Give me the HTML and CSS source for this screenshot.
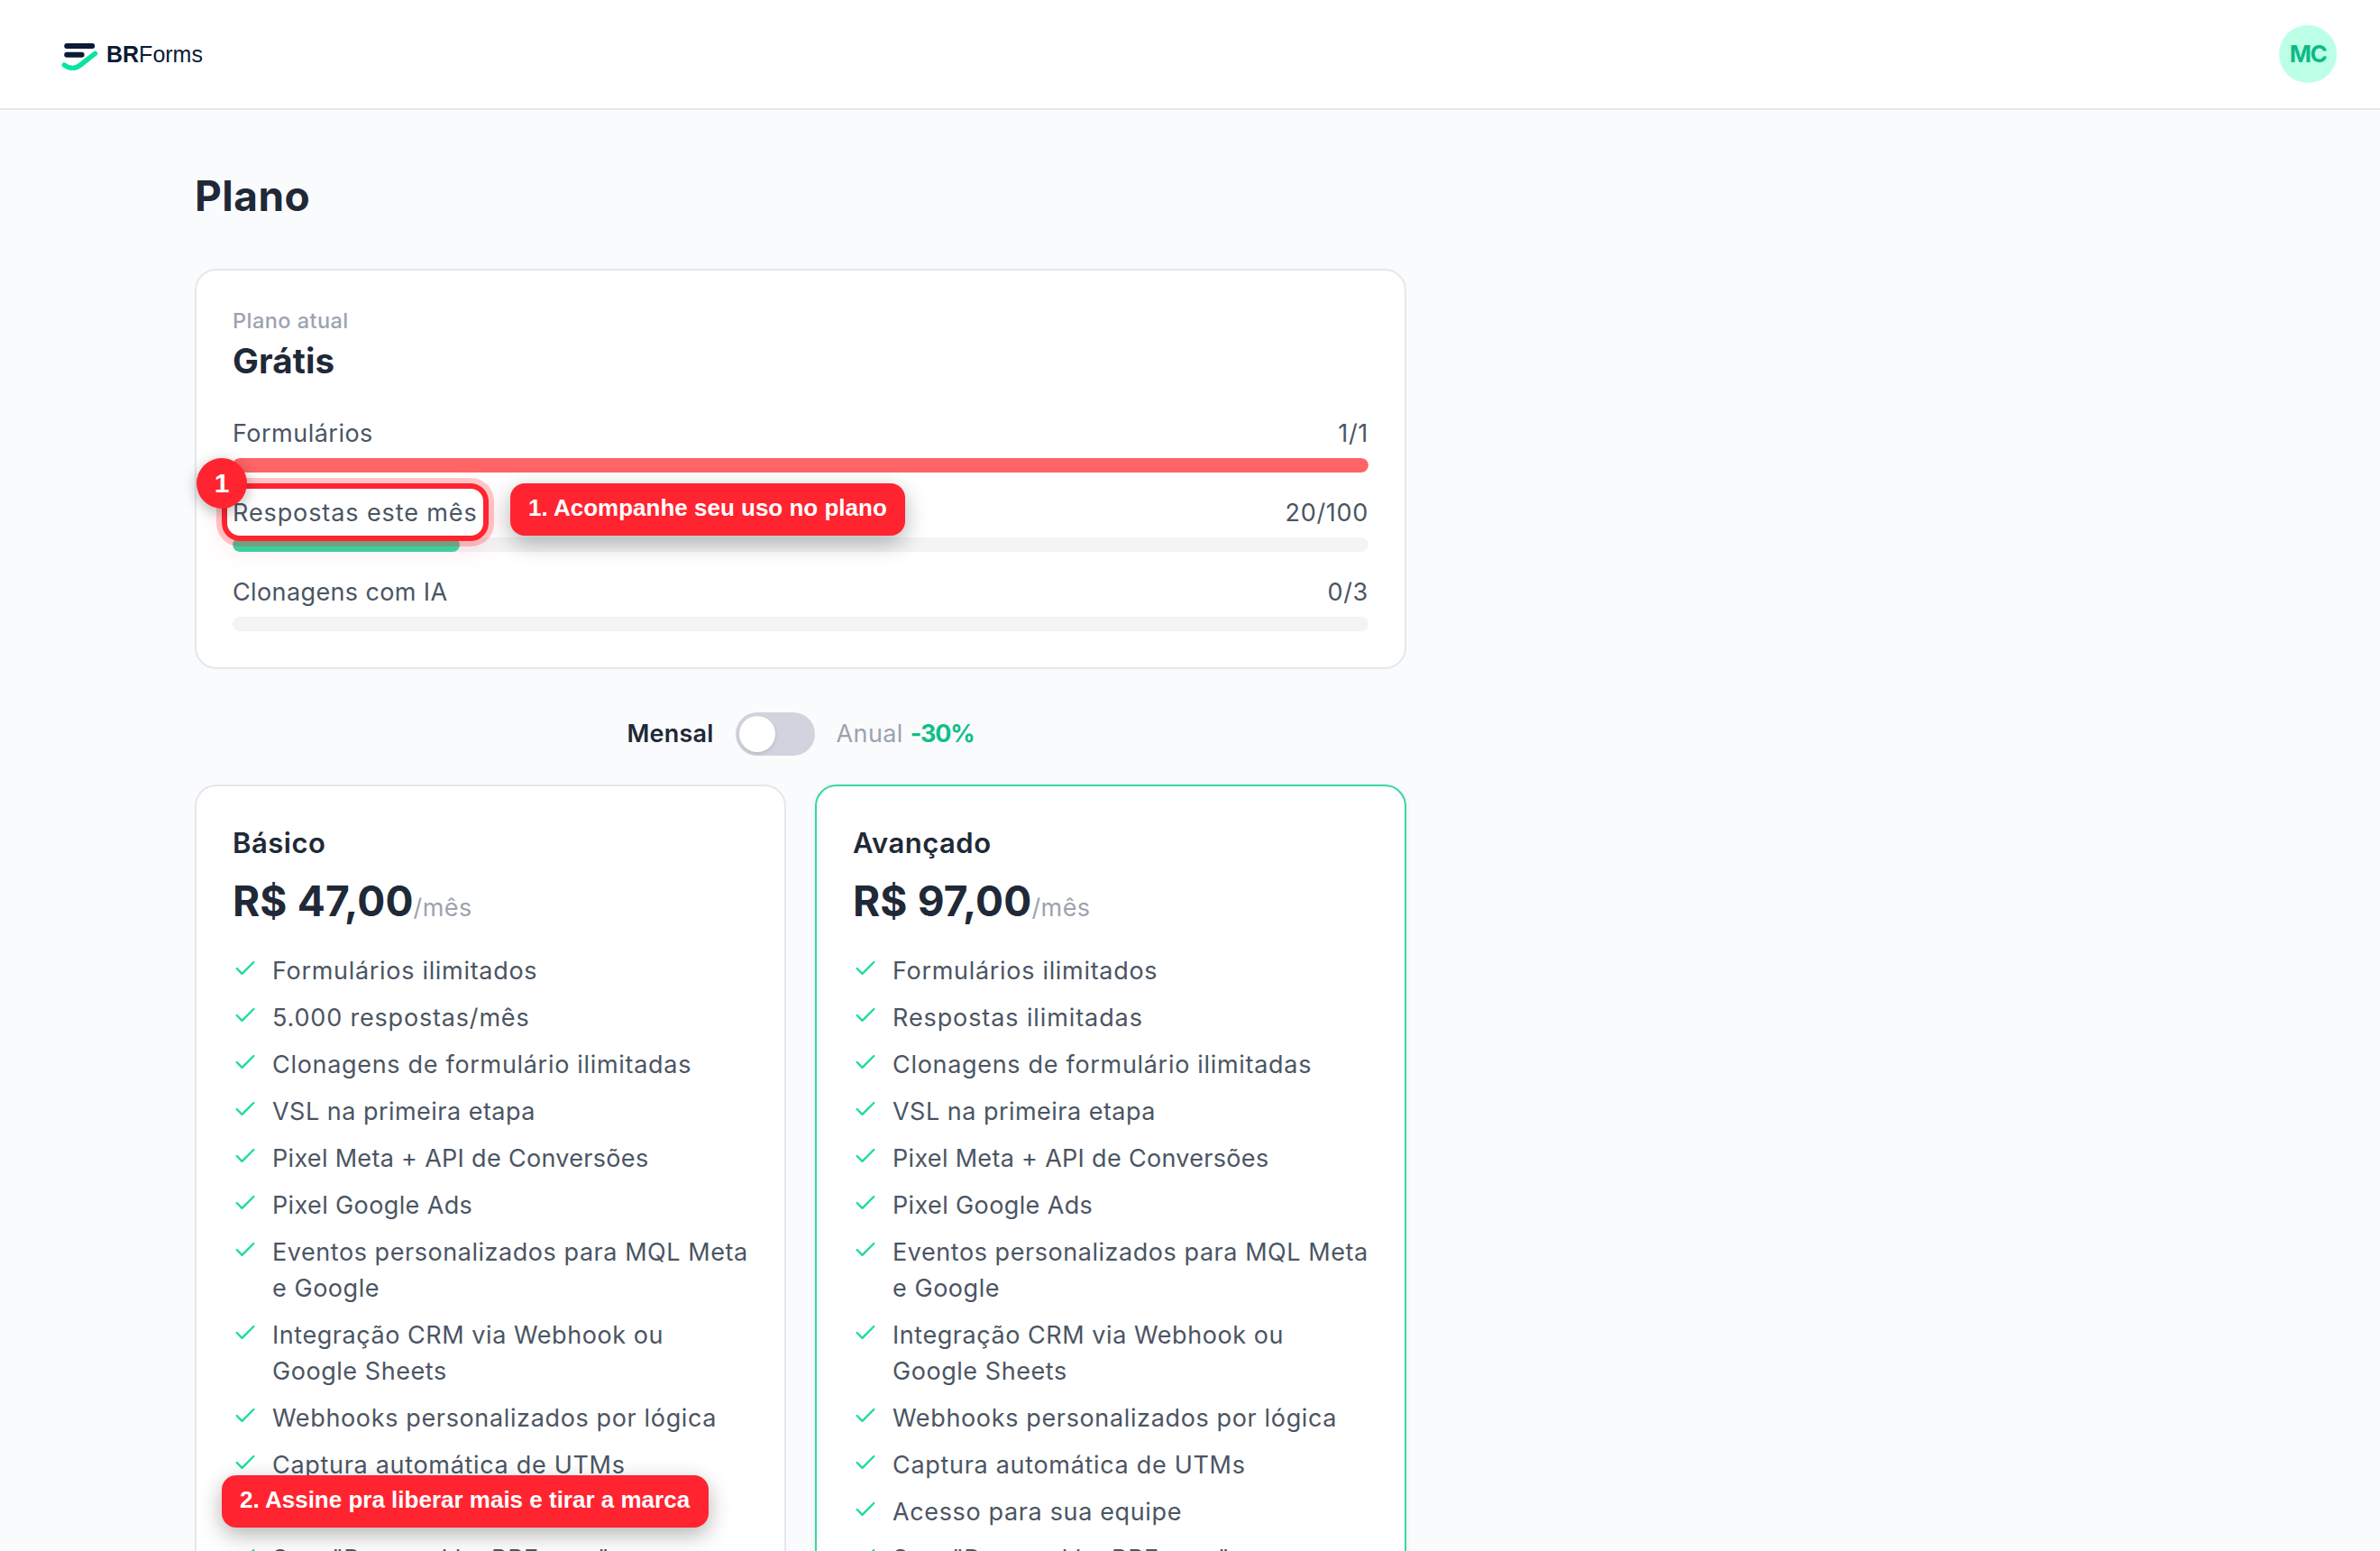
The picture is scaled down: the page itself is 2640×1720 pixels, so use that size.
FILE: index.html
```html
<!DOCTYPE html>
<html lang="pt-BR">
<head>
  <meta charset="UTF-8" />
  <meta name="viewport" content="width=device-width, initial-scale=1.0"/>
  <title>Plano - BRForms</title>
  <link rel="stylesheet" href="styles.css">
</head>
<body>

<svg class="sprite">
  <symbol id="check" viewBox="0 0 24 24">
    <path d="M20 6 9 17l-5-5" fill="none" stroke="currentColor" stroke-width="2" stroke-linecap="round" stroke-linejoin="round"/>
  </symbol>
</svg>

<!-- Topo -->
<header class="header">
  <div class="logo">
    <svg class="logo-icon" viewBox="0 0 42 32">
      <path d="M6.2 5H34.2M6.2 14.8H22.6" stroke="#0b1b36" stroke-width="6" stroke-linecap="round" fill="none"/>
      <path d="M3.4 26.2C9 30.2 16 30.6 21 26.2L37.4 13.4" stroke="#0be3a0" stroke-width="5.6" stroke-linecap="round" fill="none"/>
    </svg>
    <span class="logo-text"><b>BR</b>Forms</span>
  </div>
  <div class="avatar">MC</div>
</header>

<main class="main">
  <h1 class="title">Plano</h1>

  <!-- Uso do plano -->
  <section class="card usage">
    <div class="usage-label">Plano atual</div>
    <div class="usage-plan">Grátis</div>
    <div class="meters">
      <div class="meter">
        <div class="meter-row"><span class="ls-50">Formulários</span><span class="count">1/1</span></div>
        <div class="bar"><div class="bar-fill full" style="width: 100%"></div></div>
      </div>
      <div class="meter">
        <div class="meter-row"><span class="ls-90">Respostas este mês</span><span class="count">20/100</span></div>
        <div class="bar"><div class="bar-fill" style="width: 20%"></div></div>
      </div>
      <div class="meter">
        <div class="meter-row"><span class="ls-40">Clonagens com IA</span><span class="count">0/3</span></div>
        <div class="bar"><div class="bar-fill" style="width: 0%"></div></div>
      </div>
    </div>
    <div class="highlight"></div>
    <div class="step">1</div>
    <div class="tip tip-usage">1. Acompanhe seu uso no plano</div>
  </section>

  <!-- Mensal / Anual -->
  <div class="billing">
    <span class="billing-on">Mensal</span>
    <span class="switch"><span class="knob"></span></span>
    <span class="billing-off">Anual <b class="discount">-30%</b></span>
  </div>

  <div class="plans">
    <section class="card plan">
      <h2 class="plan-name">Básico</h2>
      <div class="price"><span class="amount">R$ 47,00</span><span class="period">/mês</span></div>
      <ul class="features">
        <li><svg class="check"><use href="#check"/></svg><span class="ls-70">Formulários ilimitados</span></li>
        <li><svg class="check"><use href="#check"/></svg><span class="ls-80">5.000 respostas/mês</span></li>
        <li><svg class="check"><use href="#check"/></svg><span class="ls-70">Clonagens de formulário ilimitadas</span></li>
        <li><svg class="check"><use href="#check"/></svg><span class="ls-50">VSL na primeira etapa</span></li>
        <li><svg class="check"><use href="#check"/></svg><span class="ls-30">Pixel Meta + API de Conversões</span></li>
        <li><svg class="check"><use href="#check"/></svg><span class="ls-40">Pixel Google Ads</span></li>
        <li><svg class="check"><use href="#check"/></svg><span class="ls-55">Eventos personalizados para MQL Meta<br>e Google</span></li>
        <li><svg class="check"><use href="#check"/></svg><span class="ls-55">Integração CRM via Webhook ou<br>Google Sheets</span></li>
        <li><svg class="check"><use href="#check"/></svg><span class="ls-65">Webhooks personalizados por lógica</span></li>
        <li><svg class="check"><use href="#check"/></svg><span class="ls-70">Captura automática de UTMs</span></li>
        <li><svg class="check"><use href="#check"/></svg><span class="ls-65">Acesso para sua equipe</span></li>
        <li><svg class="check"><use href="#check"/></svg><span class="ls-50">Sem "Powered by BRForms"</span></li>
      </ul>
      <div class="tip tip-plan">2. Assine pra liberar mais e tirar a marca</div>
    </section>

    <section class="card plan featured">
      <h2 class="plan-name">Avançado</h2>
      <div class="price"><span class="amount">R$ 97,00</span><span class="period">/mês</span></div>
      <ul class="features">
        <li><svg class="check"><use href="#check"/></svg><span class="ls-70">Formulários ilimitados</span></li>
        <li><svg class="check"><use href="#check"/></svg><span class="ls-90">Respostas ilimitadas</span></li>
        <li><svg class="check"><use href="#check"/></svg><span class="ls-70">Clonagens de formulário ilimitadas</span></li>
        <li><svg class="check"><use href="#check"/></svg><span class="ls-50">VSL na primeira etapa</span></li>
        <li><svg class="check"><use href="#check"/></svg><span class="ls-30">Pixel Meta + API de Conversões</span></li>
        <li><svg class="check"><use href="#check"/></svg><span class="ls-40">Pixel Google Ads</span></li>
        <li><svg class="check"><use href="#check"/></svg><span class="ls-55">Eventos personalizados para MQL Meta<br>e Google</span></li>
        <li><svg class="check"><use href="#check"/></svg><span class="ls-55">Integração CRM via Webhook ou<br>Google Sheets</span></li>
        <li><svg class="check"><use href="#check"/></svg><span class="ls-65">Webhooks personalizados por lógica</span></li>
        <li><svg class="check"><use href="#check"/></svg><span class="ls-70">Captura automática de UTMs</span></li>
        <li><svg class="check"><use href="#check"/></svg><span class="ls-65">Acesso para sua equipe</span></li>
        <li><svg class="check"><use href="#check"/></svg><span class="ls-50">Sem "Powered by BRForms"</span></li>
      </ul>
    </section>
  </div>
</main>

</body>
</html>
```
FILE: styles.css
```css
* {
  box-sizing: border-box;
}

body {
  margin: 0;
  height: 1720px;
  overflow: hidden;
  background: #fafbfd;
  color: #4b5563;
  font-family: Inter, "Liberation Sans", sans-serif;
  font-size: 27px;
  line-height: 40px;
}

.sprite {
  display: none;
}

/* Topo */
.header {
  height: 122px;
  padding: 0 48px 0 68px;
  display: flex;
  justify-content: space-between;
  align-items: center;
  background: #fff;
  border-bottom: 2px solid #e5e7eb;
}

.logo {
  display: flex;
  align-items: center;
  gap: 8px;
}

.logo-icon {
  width: 42px;
  height: 32px;
  margin-top: 3px;
}

.logo-text {
  font-family: "Liberation Sans", Arial, sans-serif;
  font-size: 25px;
  color: #0b1b36;
}

.avatar {
  width: 64px;
  height: 64px;
  border-radius: 50%;
  background: #bbffe7;
  color: #0dba84;
  font-weight: 700;
  font-size: 26px;
  line-height: 63px;
  letter-spacing: -1.5px;
  text-align: center;
}

.main {
  width: 1344px;
  margin-left: 216px;
  padding-top: 64px;
}

.title {
  margin: 0 0 50px;
  font-size: 46px;
  line-height: 62px;
  letter-spacing: 0.5px;
  font-weight: 700;
  color: #1f2937;
}

.card {
  position: relative;
  background: #fff;
  border: 2px solid #e5e7eb;
  border-radius: 24px;
  padding: 40px;
}

/* Uso */
.usage-label {
  font-size: 23.5px;
  line-height: 32px;
  letter-spacing: 0.45px;
  font-weight: 500;
  color: #9ca3af;
}

.usage-plan {
  font-size: 38.5px;
  line-height: 56px;
  letter-spacing: 0.1px;
  font-weight: 700;
  color: #1f2937;
  margin-bottom: 32px;
}

.meters {
  display: flex;
  flex-direction: column;
  gap: 24px;
}

.meter-row {
  display: flex;
  justify-content: space-between;
  padding-top: 1px;
  margin-bottom: 7px;
}

.count {
  letter-spacing: 0.7px;
}

.bar {
  height: 16px;
  border-radius: 8px;
  background: #f3f4f6;
  overflow: hidden;
}

.bar-fill {
  height: 16px;
  border-radius: 8px;
  background: #34d9a5;
}

.bar-fill.full {
  background: #ff6467;
}

/* Marcações */
.highlight {
  position: absolute;
  left: 28px;
  top: 236px;
  width: 296px;
  height: 64px;
  border: 6px solid #ff2430;
  border-radius: 20px;
  box-shadow: 0 0 0 6px rgba(255, 36, 48, 0.25), 0 8px 28px rgba(255, 36, 48, 0.12);
}

.step {
  position: absolute;
  left: 0;
  top: 208px;
  width: 56px;
  height: 56px;
  border-radius: 50%;
  background: #ff2430;
  color: #fff;
  font-family: "Liberation Sans", Arial, sans-serif;
  font-weight: 700;
  font-size: 30px;
  line-height: 55px;
  text-align: center;
  box-shadow: 0 4px 16px rgba(0, 0, 0, 0.3);
}

.tip {
  position: absolute;
  height: 58px;
  padding: 0 20px;
  border-radius: 16px;
  background: #ff2430;
  color: #fff;
  font-family: "Liberation Sans", Arial, sans-serif;
  font-weight: 700;
  font-size: 26px;
  line-height: 55px;
  white-space: nowrap;
  box-shadow: 0 8px 24px rgba(0, 0, 0, 0.3);
}

.tip-usage {
  left: 348px;
  top: 236px;
  width: 438px;
}

.tip-plan {
  left: 28px;
  top: 764px;
  width: 540px;
}

/* Mensal / Anual */
.billing {
  display: flex;
  justify-content: center;
  align-items: center;
  gap: 24px;
  height: 48px;
  margin: 48px 0 32px;
}

.billing-on {
  font-weight: 600;
  letter-spacing: 0.2px;
  color: #1f2937;
}

.billing-off {
  letter-spacing: 0.4px;
  color: #9ca3af;
}

.discount {
  font-weight: 700;
  letter-spacing: -1.2px;
  color: #10bf87;
}

.switch {
  width: 88px;
  height: 48px;
  padding: 4px;
  border-radius: 24px;
  background: #d1d4de;
}

.knob {
  display: block;
  width: 40px;
  height: 40px;
  border-radius: 50%;
  background: #fff;
  box-shadow: 0 2px 4px rgba(0, 0, 0, 0.12);
}

/* Planos */
.plans {
  display: grid;
  grid-template-columns: 1fr 1fr;
  gap: 32px;
}

.featured {
  border-color: #34d9a5;
  box-shadow: 0 2px 6px rgba(0, 0, 0, 0.08);
}

.plan-name {
  margin: 0;
  font-size: 31px;
  line-height: 45px;
  letter-spacing: 0.5px;
  font-weight: 600;
  color: #1f2937;
}

.price {
  height: 84px;
  line-height: 84px;
  margin-bottom: 16px;
  white-space: nowrap;
}

.amount {
  font-size: 46px;
  letter-spacing: 0.15px;
  font-weight: 700;
  color: #1f2937;
}

.period {
  letter-spacing: 0.4px;
  color: #9ca3af;
}

.features {
  list-style: none;
  margin: 0;
  padding: 0;
  display: flex;
  flex-direction: column;
  gap: 12px;
}

.features li {
  display: flex;
  gap: 16px;
  white-space: nowrap;
}

.check {
  flex: none;
  width: 28px;
  height: 28px;
  margin-top: 3px;
  color: #1bdba2;
}

/* Espaçamento das letras */
.ls-30 { letter-spacing: 0.31px; }
.ls-40 { letter-spacing: 0.38px; }
.ls-50 { letter-spacing: 0.48px; }
.ls-55 { letter-spacing: 0.55px; }
.ls-65 { letter-spacing: 0.64px; }
.ls-70 { letter-spacing: 0.69px; }
.ls-80 { letter-spacing: 0.82px; }
.ls-90 { letter-spacing: 0.9px; }
```
